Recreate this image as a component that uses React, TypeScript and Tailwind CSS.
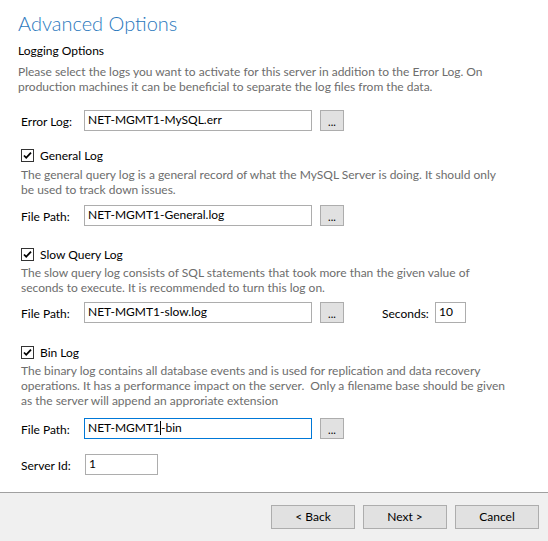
import React from 'react';

// Checkbox drawn as a Win32-style box with a check mark
const CheckBox: React.FC = () => (
  <svg width="13" height="13" viewBox="0 0 13 13" className="shrink-0">
    <rect x="0.5" y="0.5" width="12" height="12" fill="#fff" stroke="#333" />
    <path d="M3 6.5 L5.2 8.8 L10 3.6" fill="none" stroke="#000" strokeWidth="1.8" />
  </svg>
);

interface FieldProps {
  value: string;
  width: string;
  focused?: boolean;
  caretAt?: number;
}

// Faux text box, so the caret in the focused field can be shown
const Field: React.FC<FieldProps> = ({ value, width, focused, caretAt }) => (
  <div
    className={`h-[21px] ${width} border bg-white px-[3px] pt-[1px] text-[12px] leading-4 text-black whitespace-nowrap overflow-hidden ${
      focused ? 'border-[#0078d7]' : 'border-[#adadad]'
    }`}
  >
    {caretAt !== undefined ? (
      <>
        {value.slice(0, caretAt)}
        <span className="inline-block w-px h-[14px] bg-black align-[-3px]" />
        {value.slice(caretAt)}
      </>
    ) : (
      value
    )}
  </div>
);

const BrowseButton: React.FC = () => (
  <button
    type="button"
    className="ml-2 h-[21px] w-6 border border-[#adadad] bg-[#e1e1e1] text-[11px] leading-4 text-black pt-[2px]"
  >
    ...
  </button>
);

interface PathRowProps {
  label: string;
  value: string;
  focused?: boolean;
  caretAt?: number;
  children?: React.ReactNode;
}

const PathRow: React.FC<PathRowProps> = ({ label, value, focused, caretAt, children }) => (
  <div className="flex items-center pl-[21px]">
    <span className="w-[63px] text-[12px] leading-4 text-black pt-[3px]">{label}</span>
    <Field value={value} width="w-[228px]" focused={focused} caretAt={caretAt} />
    <BrowseButton />
    {children}
  </div>
);

const CheckRow: React.FC<{ label: string; className: string }> = ({ label, className }) => (
  <div className={`flex items-center h-[13px] pl-[21px] ${className}`}>
    <CheckBox />
    <span className="ml-[6px] text-[12px] leading-[13px] text-black">{label}</span>
  </div>
);

const Desc: React.FC<{ lines: string[]; className: string }> = ({ lines, className }) => (
  <div className={`text-[12px] leading-[15px] text-[#6d6d6d] whitespace-pre ${className}`}>
    {lines.map((l, i) => (
      <div key={i}>{l}</div>
    ))}
  </div>
);

const FooterButton: React.FC<{ label: string }> = ({ label }) => (
  <button
    type="button"
    className="h-6 w-[84px] border border-[#adadad] bg-[#e1e1e1] text-[12px] leading-4 text-black"
  >
    {label}
  </button>
);

export default function App() {
  return (
    <div className="w-[548px] h-[541px] bg-white flex flex-col overflow-hidden" style={{ fontFamily: 'Lato, "Noto Sans", sans-serif' }}>
      <div className="h-[492px] flex flex-col">
        <h1 className="mt-[11px] pl-[18px] text-[20px] leading-6 font-light text-[#2a78bd]">Advanced Options</h1>
        <div className="mt-[8px] pl-[18px] text-[12px] leading-4 text-black">Logging Options</div>
        <Desc
          className="mt-[5px] pl-[18px]"
          lines={[
            'Please select the logs you want to activate for this server in addition to the Error Log. On',
            'production machines it can be beneficial to separate the log files from the data.',
          ]}
        />

        <div className="mt-[16px]">
          <PathRow label="Error Log:" value="NET-MGMT1-MySQL.err" />
        </div>

        <CheckRow label="General Log" className="mt-[18px]" />
        <Desc
          className="mt-[5px] pl-[21px]"
          lines={[
            'The general query log is a general record of what the MySQL Server is doing. It should only',
            'be used to track down issues.',
          ]}
        />
        <div className="mt-[8px]">
          <PathRow label="File Path:" value="NET-MGMT1-General.log" />
        </div>

        <CheckRow label="Slow Query Log" className="mt-[22px]" />
        <Desc
          className="mt-[4px] pl-[21px]"
          lines={[
            'The slow query log consists of SQL statements that took more than the given value of',
            'seconds to execute. It is recommended to turn this log on.',
          ]}
        />
        <div className="mt-[7px]">
          <PathRow label="File Path:" value="NET-MGMT1-slow.log">
            <span className="ml-[38px] w-[53px] text-[12px] leading-4 text-black pt-[3px]">Seconds:</span>
            <Field value="10" width="w-[31px]" />
          </PathRow>
        </div>

        <CheckRow label="Bin Log" className="mt-[23px]" />
        <Desc
          className="mt-[4px] pl-[21px]"
          lines={[
            'The binary log contains all database events and is used for replication and data recovery',
            'operations. It has a performance impact on the server.  Only a filename base should be given',
            'as the server will append an approriate extension',
          ]}
        />
        <div className="mt-[10px]">
          <PathRow label="File Path:" value="NET-MGMT1-bin" focused caretAt={9} />
        </div>

        <div className="mt-[15px] flex items-center pl-[21px]">
          <span className="w-[64px] text-[12px] leading-4 text-black pt-[3px]">Server Id:</span>
          <Field value="1" width="w-[73px]" />
        </div>
      </div>

      <footer className="flex-1 border-t border-[#a0a0a0] bg-[#f0f0f0] flex justify-end items-start gap-2 pt-[12px] pr-[9px]">
        <FooterButton label="< Back" />
        <FooterButton label="Next >" />
        <FooterButton label="Cancel" />
      </footer>
    </div>
  );
}
